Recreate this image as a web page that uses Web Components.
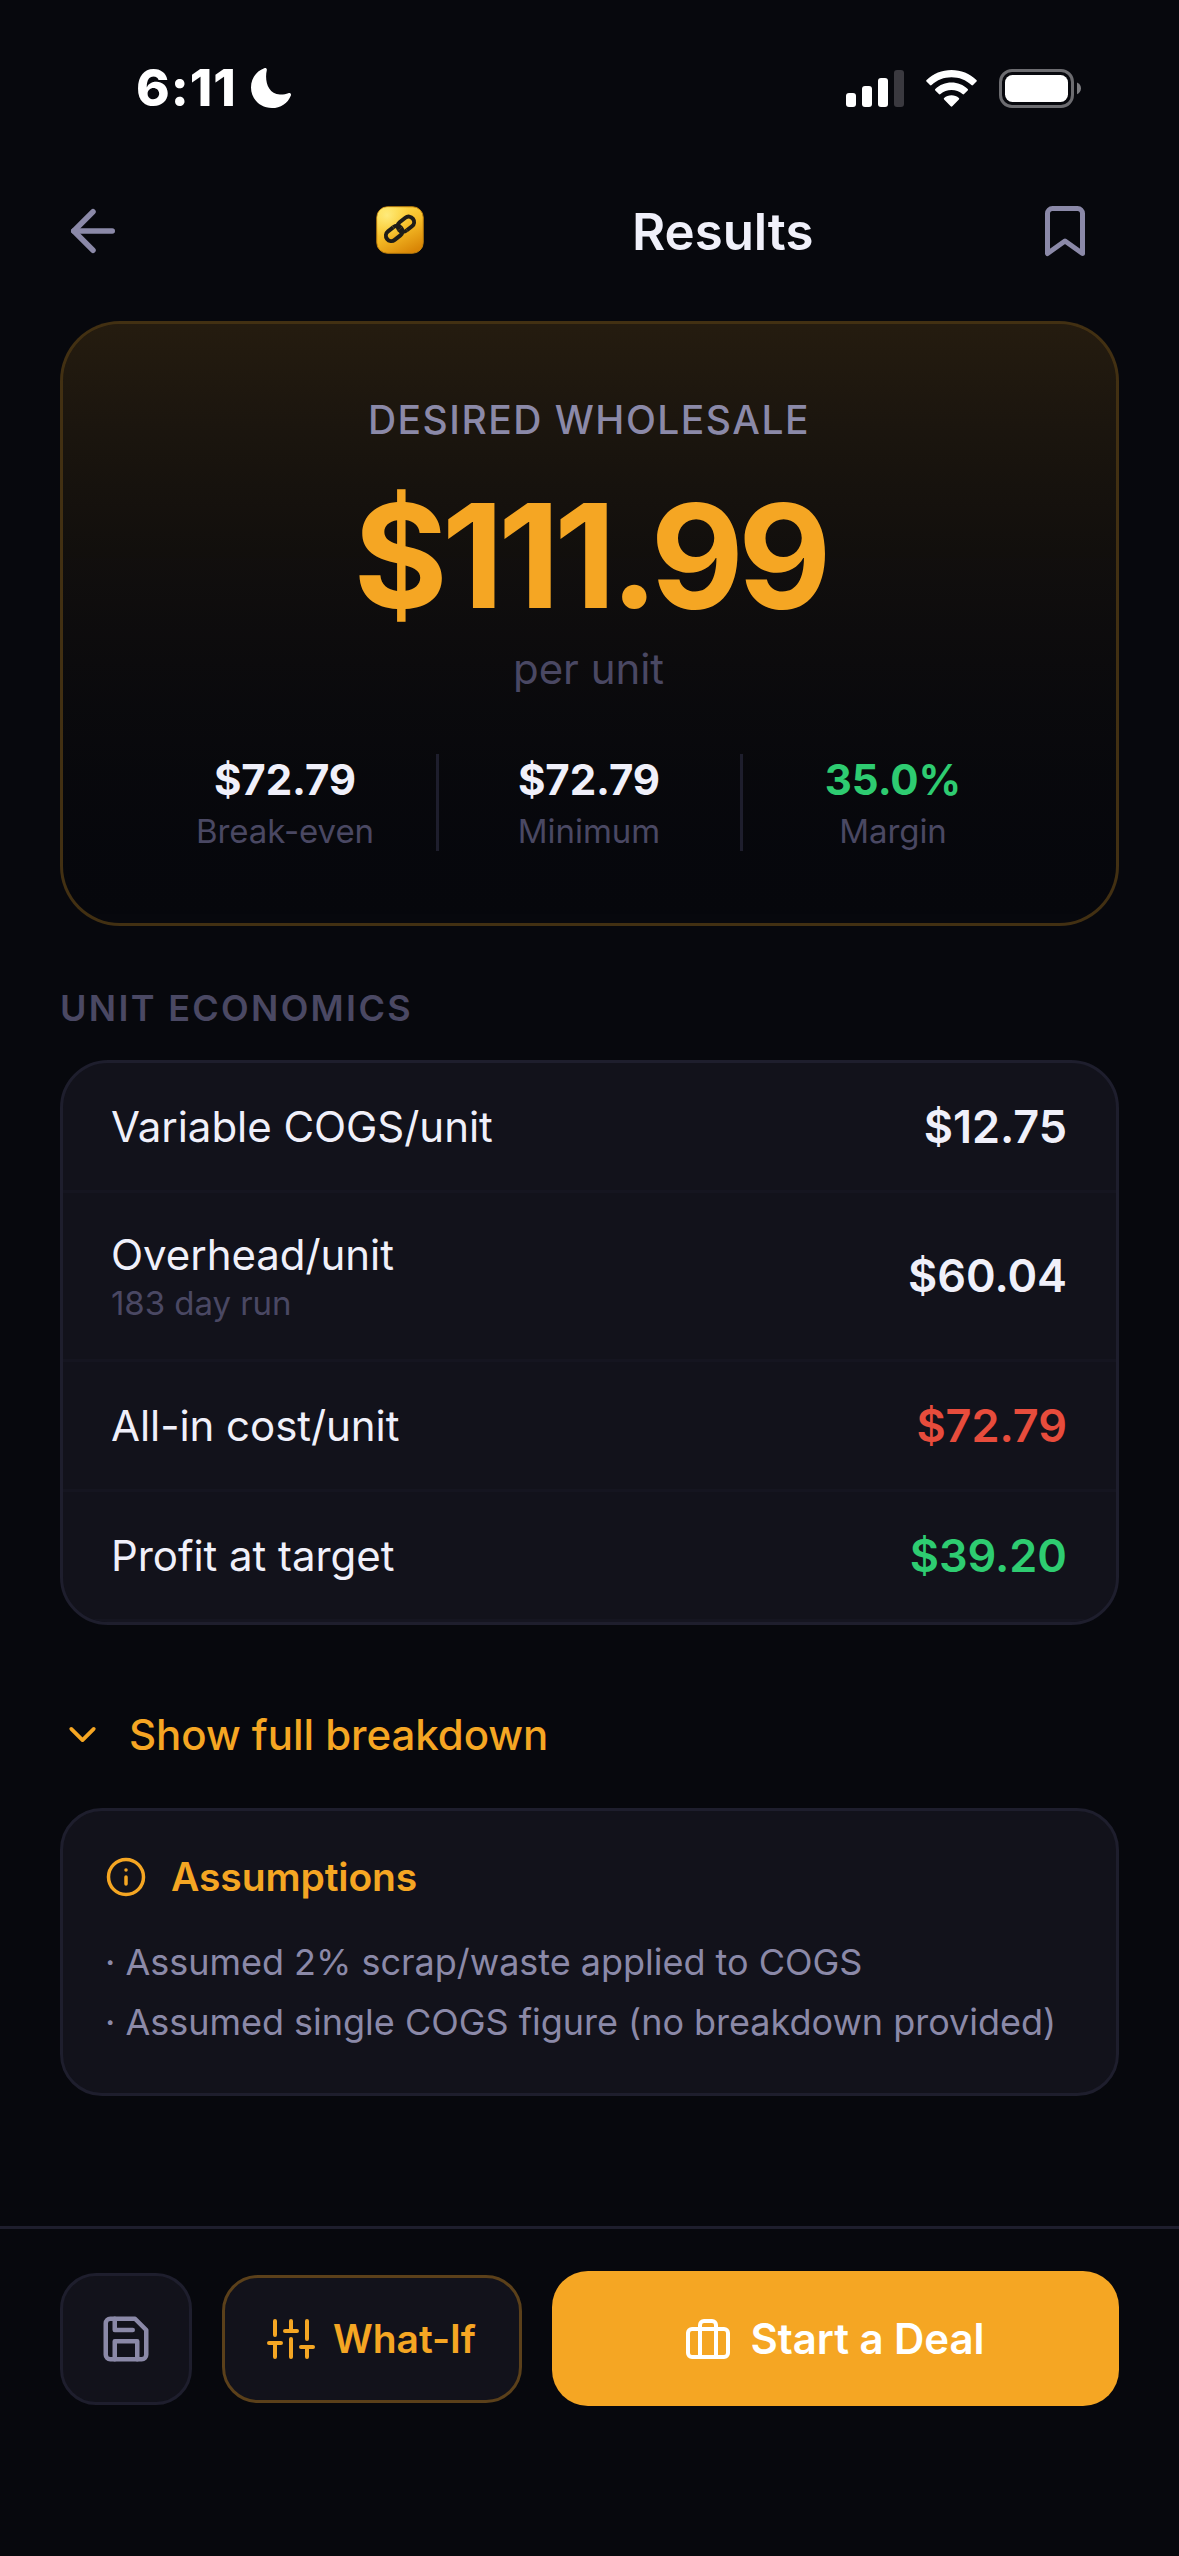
<!DOCTYPE html>
<html lang="en">
<head>
<meta charset="utf-8">
<title>Results</title>
<style>
  :root {
    --bg: #07080d; --card: #12121b; --line: #1e1e2d; --row-line: #151520;
    --text: #f0f0fa; --muted: #8b89a8; --dim: #4a4863;
    --amber: #f5a623; --green: #2ecc71; --red: #e74c3c;
  }
  html, body { margin: 0; background: var(--bg); }
  body { font-family: Inter, "Liberation Sans", sans-serif; color: var(--text); letter-spacing: -0.05px; -webkit-font-smoothing: antialiased; }
</style>
</head>
<body>
<results-screen></results-screen>

<script>
const define = (name, html) => {
  const tpl = document.createElement('template');
  tpl.innerHTML = html;
  customElements.define(name, class extends HTMLElement {
    constructor() {
      super();
      this.attachShadow({ mode: 'open' }).append(tpl.content.cloneNode(true));
    }
  });
};

const ICONS = {
  back: '<path d="M19 12H5"/><path d="M12 19l-7-7 7-7"/>',
  bookmark: '<path d="M19 21l-7-5-7 5V5a2 2 0 0 1 2-2h10a2 2 0 0 1 2 2z"/>',
  chevron: '<path d="M6 9l6 6 6-6"/>',
  info: '<circle cx="12" cy="12" r="10"/><path d="M12 16v-4M12 8h.01"/>',
  save: '<path d="M19 21H5a2 2 0 0 1-2-2V5a2 2 0 0 1 2-2h11l5 5v11a2 2 0 0 1-2 2z"/><path d="M17 21v-8H7v8"/><path d="M7 3v5h8"/>',
  sliders: '<path d="M4 21v-7M4 10V3M12 21v-9M12 8V3M20 21v-5M20 12V3M1 14h6M9 8h6M17 16h6"/>',
  briefcase: '<rect x="2" y="7" width="20" height="14" rx="2"/><path d="M16 21V5a2 2 0 0 0-2-2h-4a2 2 0 0 0-2 2v16"/>'
};

customElements.define('line-icon', class extends HTMLElement {
  connectedCallback() {
    if (this.shadowRoot) return;
    const size = this.getAttribute('size');
    this.attachShadow({ mode: 'open' }).innerHTML = `
      <style>:host{display:block;flex:none;width:${size}px;height:${size}px} svg{display:block}</style>
      <svg width="${size}" height="${size}" viewBox="0 0 24 24" fill="none" stroke="currentColor"
        stroke-width="2" stroke-linecap="round" stroke-linejoin="round">${ICONS[this.getAttribute('name')]}</svg>`;
  }
});

define('status-bar', `
  <style>
    :host { display: flex; align-items: center; height: 176px; padding: 0 98px 0 136px; box-sizing: border-box; color: #fff; }
    .time { width: 102px; font-size: 51px; font-weight: 800; line-height: 62px; letter-spacing: 1px; white-space: nowrap; }
    .moon { margin-left: 12px; margin-right: auto; }
    svg { display: block; flex: none; }
    .wifi { margin: 0 22px; }
  </style>
  <span class="time">6:11</span>
  <svg class="moon" width="42" height="42" viewBox="0 0 42 42"><path fill="#fff" d="M14.2 1.3C15.6.7 17.2 1.4 16.8 3.2 14.5 13 17.5 27 30 27.6 33.500 27.700 36 27 38.200 26.200 40 25.600 41.500 26.600 40.900 28.400 37.700 36.500 30.500 41 22 41 10 41 1 32 1 20.500 1 11.500 6.200 4.300 14.200 1.300Z"/></svg>
  <svg width="58" height="37" viewBox="0 0 58 37"><g fill="#fff"><rect y="23" width="10" height="14" rx="3"/><rect x="16" y="16" width="10" height="21" rx="3"/><rect x="32" y="8" width="10" height="29" rx="3"/><rect x="48" width="10" height="37" rx="3" fill="#3a393f"/></g></svg>
  <svg class="wifi" width="51" height="37" viewBox="0 0 51 37">
    <g fill="#fff">
      <path d="M25.500 0C35 0 43.800 3.600 50.400 9.900 51 10.400 51 11 50.500 11.500L47 15.100C46.500 15.600 45.900 15.600 45.400 15.100 40 10 33 7.300 25.500 7.300S11 10 5.600 15.100C5.100 15.600 4.500 15.600 4 15.100L.5 11.500C0 11 0 10.400.6 9.900 7.200 3.600 16 0 25.500 0Z"/>
      <path d="M25.500 12.500C31.600 12.500 37.300 14.800 41.700 18.900 42.200 19.400 42.200 20 41.700 20.500L38.100 24.100C37.600 24.600 37 24.600 36.500 24.100 33.500 21.400 29.600 20 25.500 20S17.500 21.400 14.500 24.100C14 24.600 13.400 24.600 12.900 24.100L9.300 20.500C8.800 20 8.800 19.400 9.300 18.900 13.700 14.800 19.400 12.500 25.500 12.500Z"/>
      <path d="M25.500 25.300C28.300 25.300 30.900 26.200 32.900 27.900 33.400 28.400 33.400 29 32.900 29.500L26.300 36.300C25.800 36.900 25.200 36.900 24.700 36.300L18.100 29.500C17.600 29 17.600 28.400 18.100 27.900 20.100 26.200 22.700 25.300 25.500 25.300Z"/>
    </g>
  </svg>
  <svg width="82" height="39" viewBox="0 0 82 39"><rect x="1.500" y="1.500" width="72" height="36" rx="11.500" fill="none" stroke="#6c6c70" stroke-width="3"/><rect x="6" y="6" width="63" height="27" rx="7.500" fill="#fff"/><path d="M78 13.500c2.500 1 4 3.200 4 5.800s-1.500 4.900-4 5.900z" fill="#7c7c80"/></svg>
`);

define('app-badge', `
  <style>:host{display:block;flex:none} svg{display:block}</style>
  <svg width="48" height="48" viewBox="0 0 48 48">
    <defs>
      <linearGradient id="g" x1=".2" y1="0" x2=".7" y2="1"><stop offset="0" stop-color="#ffdf52"/><stop offset=".5" stop-color="#f6bd27"/><stop offset="1" stop-color="#d98606"/></linearGradient>
      <radialGradient id="h" cx=".22" cy=".18" r=".5"><stop offset="0" stop-color="#fff08a" stop-opacity=".8"/><stop offset="1" stop-color="#ffe45c" stop-opacity="0"/></radialGradient>
    </defs>
    <rect x=".8" y=".8" width="46.400" height="46.400" rx="10.500" fill="url(#g)" stroke="#c9860c" stroke-width="1"/>
    <rect x="1" y="1" width="46" height="46" rx="10" fill="url(#h)"/>
    <g fill="none" stroke="#1d1c18" stroke-width="4" transform="rotate(-38 24 22.800)">
      <path d="M25.500 22.800a5.200 5.200 0 0 1-5.200 5.400h-7.300a5.400 5.400 0 0 1 0-10.800h6.500"/>
      <path d="M22.500 22.800a5.200 5.200 0 0 1 5.200-5.400h7.300a5.400 5.400 0 0 1 0 10.800h-6.500"/>
      <path d="M19.500 17.400c3.800 0 6 2.400 6 5.400M28.500 28.200c-3.800 0-6-2.400-6-5.400"/>
    </g>
  </svg>
`);

define('nav-header', `
  <style>
    :host { display: flex; align-items: center; height: 110px; padding: 0 84px 0 60px; color: var(--muted); }
    app-badge { margin-left: 250px; margin-top: -2px; }
    h1 { margin: 2px auto 0 208px; font-size: 51px; font-weight: 600; line-height: 62px; color: var(--text); }
  </style>
  <line-icon name="back" size="66"></line-icon>
  <app-badge></app-badge>
  <h1>Results</h1>
  <line-icon name="bookmark" size="60"></line-icon>
`);

define('stat-cell', `
  <style>
    :host { display: flex; flex: 1; flex-direction: column; align-items: center; gap: 6px; }
    .v { margin-right: 1px; font-size: 42px; font-weight: 700; line-height: 51px; letter-spacing: -0.1px; color: var(--tone, var(--text)); }
    .l { margin-right: 1px; font-size: 33px; line-height: 40px; color: var(--dim); }
  </style>
  <span class="v"><slot name="value"></slot></span><span class="l"><slot></slot></span>
`);

define('price-hero', `
  <style>
    :host { display: flex; flex-direction: column; align-items: center; box-sizing: border-box; height: 605px;
      padding: 72px 72px 0; border: 3px solid rgba(245,166,35,.25); border-radius: 60px;
      background: linear-gradient(180deg, rgba(245,166,35,.125), rgba(214,145,31,.109) 12.5%, rgba(184,125,26,.094) 25%,
        rgba(153,104,22,.078) 37.5%, rgba(123,83,18,.0625) 50%, rgba(92,62,13,.047) 62.5%,
        rgba(61,42,9,.031) 75%, rgba(31,21,4,.016) 87.5%, rgba(0,0,0,0)) padding-box; }
    .k { margin-right: 1px; font-size: 39px; font-weight: 500; line-height: 48px; letter-spacing: 1.5px; color: var(--muted); }
    .p { margin-top: 25px; font-size: 144px; font-weight: 700; line-height: 174px; letter-spacing: -6px; color: var(--amber); }
    .u { margin-right: 2px; font-size: 42px; line-height: 51px; color: var(--dim); }
    .stats { display: flex; align-self: stretch; margin-top: 60px; }
    i { width: 3px; background: var(--line); }
  </style>
  <span class="k">DESIRED WHOLESALE</span>
  <span class="p">$111.99</span>
  <span class="u">per unit</span>
  <div class="stats">
    <stat-cell><span slot="value">$72.79</span>Break-even</stat-cell><i></i>
    <stat-cell><span slot="value">$72.79</span>Minimum</stat-cell><i></i>
    <stat-cell style="--tone:var(--green)"><span slot="value">35.0%</span>Margin</stat-cell>
  </div>
`);

define('cost-row', `
  <style>
    :host { display: flex; align-items: center; justify-content: space-between; padding: 36px 48px; border-bottom: 3px solid var(--row-line); }
    .l { display: flex; flex-direction: column; gap: 3px; font-size: 42px; line-height: 51px; }
    ::slotted([slot=note]) { font-size: 33px; line-height: 40px; color: var(--dim); }
    .v { margin: 0 1px var(--lift, 0) 0; font-size: 45px; font-weight: 600; line-height: 55px; color: var(--tone, var(--text)); }
  </style>
  <div class="l"><span><slot></slot></span><slot name="note"></slot></div>
  <span class="v"><slot name="value"></slot></span>
`);

define('cost-table', `
  <style>:host { display: block; overflow: hidden; border: 3px solid var(--line); border-radius: 48px; background: var(--card); }</style>
  <slot></slot>
`);

define('section-title', `
  <style>:host { display: block; font-size: 36px; font-weight: 600; line-height: 44px; letter-spacing: 2.3px; color: var(--dim); }</style>
  <slot></slot>
`);

define('expand-toggle', `
  <style>:host { display: flex; align-items: center; gap: 24px; font-size: 42px; font-weight: 500; line-height: 51px; color: var(--amber); }</style>
  <line-icon name="chevron" size="45"></line-icon><span><slot></slot></span>
`);

define('assumption-card', `
  <style>
    :host { display: block; box-sizing: border-box; height: 288px; padding: 42px; border: 3px solid var(--line); border-radius: 42px; background: var(--card); }
    .t { display: flex; align-items: center; gap: 24px; font-size: 39px; font-weight: 600; line-height: 48px; letter-spacing: -0.1px; color: var(--amber); }
    .b { margin-top: 31px; font-size: 36px; line-height: 60px; letter-spacing: -0.02px; color: var(--muted); white-space: nowrap; }
    ::slotted(div) { display: block; }
  </style>
  <div class="t"><line-icon name="info" size="42"></line-icon><span><slot name="title"></slot></span></div>
  <div class="b"><slot></slot></div>
`);

define('action-button', `
  <style>
    :host { display: flex; align-items: center; justify-content: center; gap: 18px; box-sizing: border-box; flex: none;
      height: 132px; border: 3px solid var(--line); border-radius: 36px; background: var(--card); color: var(--muted);
      font-size: 39px; font-weight: 600; line-height: 48px; white-space: nowrap; }
    :host([kind=square]) { width: 132px; }
    :host([kind=outline]) { width: 300px; height: 128px; padding-right: 1px; border-color: #5b401a; color: var(--amber); }
    :host([kind=primary]) { flex: 1; height: 135px; padding-right: 2px; border: 0; background: var(--amber); color: #fff; font-size: 42px; line-height: 51px; }
  </style>
  <slot></slot>
`);

define('action-bar', `
  <style>:host { display: flex; align-items: center; gap: 30px; box-sizing: border-box; height: 330px; padding: 42px 60px 150px; border-top: 3px solid var(--line); }</style>
  <slot></slot>
`);

define('results-screen', `
  <style>
    :host { display: flex; flex-direction: column; width: 1179px; height: 2556px; overflow: hidden; background: var(--bg); }
    main { display: flex; flex-direction: column; flex: 1; padding: 35px 60px 0; }
    section-title { margin: 60px 0 30px; }
    expand-toggle { margin: 84px 0 48px; }
  </style>
  <status-bar></status-bar>
  <nav-header></nav-header>
  <main>
    <price-hero></price-hero>
    <section-title>UNIT ECONOMICS</section-title>
    <cost-table>
      <cost-row>Variable COGS/unit<span slot="value">$12.75</span></cost-row>
      <cost-row style="--lift:2px">Overhead/unit<span slot="note">183 day run</span><span slot="value">$60.04</span></cost-row>
      <cost-row style="--tone:var(--red)">All-in cost/unit<span slot="value">$72.79</span></cost-row>
      <cost-row style="--tone:var(--green)">Profit at target<span slot="value">$39.20</span></cost-row>
    </cost-table>
    <expand-toggle>Show full breakdown</expand-toggle>
    <assumption-card>
      <span slot="title">Assumptions</span>
      <div>· Assumed 2% scrap/waste applied to COGS</div>
      <div>· Assumed single COGS figure (no breakdown provided)</div>
    </assumption-card>
  </main>
  <action-bar>
    <action-button kind="square"><line-icon name="save" size="54"></line-icon></action-button>
    <action-button kind="outline"><line-icon name="sliders" size="48"></line-icon><span>What-If</span></action-button>
    <action-button kind="primary"><line-icon name="briefcase" size="48"></line-icon><span>Start a Deal</span></action-button>
  </action-bar>
`);
</script>
</body>
</html>
